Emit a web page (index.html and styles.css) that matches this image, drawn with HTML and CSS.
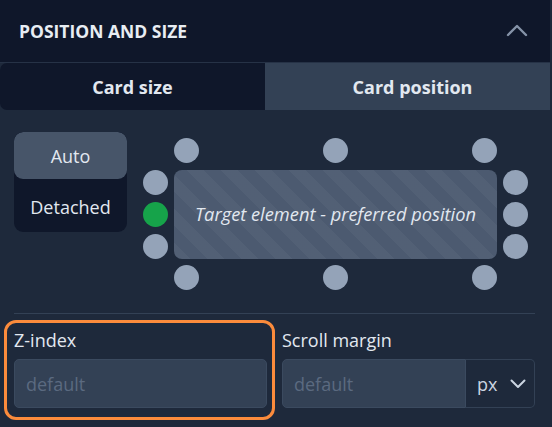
FILE: index.html
```html
<!DOCTYPE html>
<html lang="en">
<head>
<meta charset="utf-8">
<title>Position and size</title>
<link rel="stylesheet" href="styles.css">
</head>
<body>
<div class="panel">
  <header class="panel-header">
    <h2 class="panel-title">POSITION AND SIZE</h2>
    <svg class="collapse-icon" width="22" height="14" viewBox="0 0 22 14" aria-hidden="true">
      <path d="M2 12 L11 3 L20 12" fill="none" stroke="#8593a8" stroke-width="2.4" stroke-linecap="round" stroke-linejoin="round"/>
    </svg>
  </header>

  <div class="tabs">
    <button class="tab">Card size</button>
    <button class="tab tab-active">Card position</button>
  </div>

  <div class="content">
    <div class="placement">
      <div class="mode-toggle">
        <div class="mode mode-active">Auto</div>
        <div class="mode mode-detached">Detached</div>
      </div>

      <div class="diagram">
        <div class="dots dots-top"><span class="dot"></span><span class="dot"></span><span class="dot"></span></div>
        <div class="dots dots-left"><span class="dot"></span><span class="dot dot-on"></span><span class="dot"></span></div>
        <div class="target">Target element - preferred position</div>
        <div class="dots dots-right"><span class="dot"></span><span class="dot"></span><span class="dot"></span></div>
        <div class="dots dots-bottom"><span class="dot"></span><span class="dot"></span><span class="dot"></span></div>
      </div>
    </div>

    <div class="separator"></div>

    <div class="fields">
      <div class="field field-highlighted">
        <span class="highlight"></span>
        <label class="field-label">Z-index</label>
        <input class="input" type="text" placeholder="default">
      </div>
      <div class="field">
        <label class="field-label">Scroll margin</label>
        <div class="input-group">
          <input class="input input-joined" type="text" placeholder="default">
          <div class="unit-select">
            <span>px</span>
            <svg width="16" height="10" viewBox="0 0 16 10" aria-hidden="true">
              <path d="M1.5 1.5 L8 8 L14.5 1.5" fill="none" stroke="#cbd5e1" stroke-width="2" stroke-linecap="round" stroke-linejoin="round"/>
            </svg>
          </div>
        </div>
      </div>
    </div>
  </div>
</div>
</body>
</html>
```

FILE: styles.css
```css
* { box-sizing: border-box; }

html, body {
  margin: 0;
  padding: 0;
  background: #1e293b;
}

body {
  font-family: "Open Sans", "Noto Sans", sans-serif;
  color: #e2e8f0;
  width: 552px;
  height: 427px;
  overflow: hidden;
}

.panel {
  width: 550px;
  background: #1e293b;
}

.panel-header {
  height: 63px;
  background: #0f172a;
  border-bottom: 1px solid #263246;
  display: flex;
  align-items: center;
  justify-content: space-between;
  padding: 0 22px 0 19px;
}

.panel-title {
  margin: 0;
  font-size: 17.5px;
  font-weight: 700;
  letter-spacing: 0;
  color: #e8edf3;
}

.collapse-icon { display: block; margin-top: -2px; }

.tabs {
  display: grid;
  grid-template-columns: 265px 1fr;
  height: 47px;
}

.tab {
  border: 0;
  margin: 0;
  font-family: inherit;
  font-size: 18px;
  font-weight: 700;
  color: #e2e8f0;
  background: #0f172a;
  cursor: pointer;
}

.tab:first-child { border-radius: 7px 0 0 7px; }

.tab-active {
  background: #334155;
  padding-left: 16px;
}

.content {
  padding: 22px 15px 0 14px;
}

.placement {
  display: flex;
  align-items: flex-start;
  gap: 16px;
}

.mode-toggle {
  width: 113px;
  height: 100px;
  border-radius: 9px;
  background: #0f172a;
  display: flex;
  flex-direction: column;
  overflow: hidden;
}

.mode {
  display: flex;
  align-items: center;
  justify-content: center;
  font-size: 18px;
  color: #e2e8f0;
}

.mode-active {
  height: 47px;
  background: #475569;
  border-radius: 9px;
}

.mode-detached { flex: 1; padding-top: 3px; }

.diagram {
  margin-top: 6px;
  display: grid;
  grid-template-columns: 25px 323px 25px;
  grid-template-rows: 25px 89px 25px;
  column-gap: 6px;
  row-gap: 6.5px;
}

.dots {
  display: flex;
  justify-content: space-between;
}

.dots-top { grid-column: 2; grid-row: 1; }
.dots-bottom { grid-column: 2; grid-row: 3; }
.dots-left { grid-column: 1; grid-row: 2; flex-direction: column; }
.dots-right { grid-column: 3; grid-row: 2; flex-direction: column; }

.dot {
  width: 25px;
  height: 25px;
  border-radius: 50%;
  background: #94a3b8;
}

.dot-on { background: #16a34a; }

.target {
  grid-column: 2;
  grid-row: 2;
  border-radius: 8px;
  background-color: #4c5a70;
  background-image: repeating-linear-gradient(45deg,
    rgba(255,255,255,0.035) 0px, rgba(255,255,255,0.035) 12px,
    rgba(255,255,255,0) 12px, rgba(255,255,255,0) 24px);
  display: flex;
  align-items: center;
  justify-content: center;
  font-size: 18.3px;
  font-style: italic;
  color: #e2e8f0;
  padding-bottom: 1px;
}

.separator {
  margin-top: 23px;
  height: 1px;
  background: #334155;
}

.fields {
  margin-top: 14px;
  display: grid;
  grid-template-columns: 253px 253px;
  column-gap: 15px;
}

.field {
  position: relative;
  display: flex;
  flex-direction: column;
}

.highlight {
  position: absolute;
  left: -10px;
  right: -8px;
  top: -8px;
  bottom: -12px;
  border: 3px solid #fb8b3c;
  border-radius: 12px;
  pointer-events: none;
}

.field-label {
  font-size: 18px;
  line-height: 24px;
  color: #e2e8f0;
  margin-bottom: 7px;
}

.input {
  height: 49px;
  width: 100%;
  background: #334155;
  border: 1px solid #3b4a5f;
  border-radius: 5px;
  padding: 0 11px;
  font-family: inherit;
  font-size: 18px;
  color: #e2e8f0;
  outline: none;
}

.input::placeholder { color: #5b6a80; }

.input-group {
  display: flex;
  height: 49px;
}

.input-joined {
  flex: 1;
  min-width: 0;
  border-radius: 5px 0 0 5px;
}

.unit-select {
  width: 69px;
  display: flex;
  align-items: center;
  justify-content: space-between;
  padding: 0 8px 0 11px;
  background: #1e293b;
  border: 1px solid #334155;
  border-left: 0;
  border-radius: 0 5px 5px 0;
  font-size: 18px;
  color: #cbd5e1;
}

.unit-select svg { display: block; }
```
